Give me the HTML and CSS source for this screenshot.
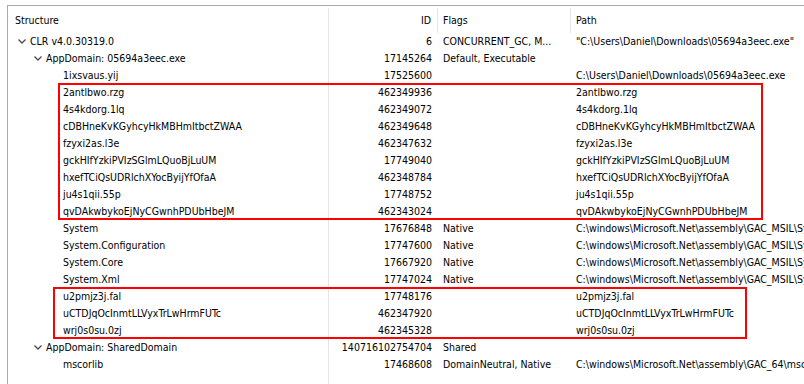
FILE: index.html
```html
<!DOCTYPE html>
<html lang="en">
<head>
    <meta charset="UTF-8">
    <title>Structure</title>
    <link rel="stylesheet" href="styles.css">
</head>
<body>

<div class="view">
    <div class="head">
        <div class="col-name">Structure</div>
        <div class="col-id">ID</div>
        <div class="col-flags">Flags</div>
        <div class="col-path">Path</div>
    </div>

    <div class="row lvl-0">
        <div class="col-name"><span class="toggle"><svg width="8" height="5" viewBox="0 0 8 5"><polyline points="0.5,0.5 4,4 7.5,0.5"/></svg></span>CLR v4.0.30319.0</div>
        <div class="col-id">6</div>
        <div class="col-flags">CONCURRENT_GC, M...</div>
        <div class="col-path">"C:\Users\Daniel\Downloads\05694a3eec.exe"</div>
    </div>
    <div class="row lvl-1">
        <div class="col-name"><span class="toggle"><svg width="8" height="5" viewBox="0 0 8 5"><polyline points="0.5,0.5 4,4 7.5,0.5"/></svg></span>AppDomain: 05694a3eec.exe</div>
        <div class="col-id">17145264</div>
        <div class="col-flags">Default, Executable</div>
        <div class="col-path"></div>
    </div>
    <div class="row lvl-2">
        <div class="col-name">1ixsvaus.yij</div>
        <div class="col-id">17525600</div>
        <div class="col-flags"></div>
        <div class="col-path">C:\Users\Daniel\Downloads\05694a3eec.exe</div>
    </div>

    <div class="group">
        <div class="row lvl-2">
            <div class="col-name">2antlbwo.rzg</div>
            <div class="col-id">462349936</div>
            <div class="col-flags"></div>
            <div class="col-path">2antlbwo.rzg</div>
        </div>
        <div class="row lvl-2">
            <div class="col-name">4s4kdorg.1lq</div>
            <div class="col-id">462349072</div>
            <div class="col-flags"></div>
            <div class="col-path">4s4kdorg.1lq</div>
        </div>
        <div class="row lvl-2">
            <div class="col-name">cDBHneKvKGyhcyHkMBHmItbctZWAA</div>
            <div class="col-id">462349648</div>
            <div class="col-flags"></div>
            <div class="col-path">cDBHneKvKGyhcyHkMBHmItbctZWAA</div>
        </div>
        <div class="row lvl-2">
            <div class="col-name">fzyxi2as.l3e</div>
            <div class="col-id">462347632</div>
            <div class="col-flags"></div>
            <div class="col-path">fzyxi2as.l3e</div>
        </div>
        <div class="row lvl-2">
            <div class="col-name">gckHIfYzkiPVIzSGlmLQuoBjLuUM</div>
            <div class="col-id">17749040</div>
            <div class="col-flags"></div>
            <div class="col-path">gckHIfYzkiPVIzSGlmLQuoBjLuUM</div>
        </div>
        <div class="row lvl-2">
            <div class="col-name">hxefTCiQsUDRlchXYocByijYfOfaA</div>
            <div class="col-id">462348784</div>
            <div class="col-flags"></div>
            <div class="col-path">hxefTCiQsUDRlchXYocByijYfOfaA</div>
        </div>
        <div class="row lvl-2">
            <div class="col-name">ju4s1qii.55p</div>
            <div class="col-id">17748752</div>
            <div class="col-flags"></div>
            <div class="col-path">ju4s1qii.55p</div>
        </div>
        <div class="row lvl-2">
            <div class="col-name">qvDAkwbykoEjNyCGwnhPDUbHbeJM</div>
            <div class="col-id">462343024</div>
            <div class="col-flags"></div>
            <div class="col-path">qvDAkwbykoEjNyCGwnhPDUbHbeJM</div>
        </div>
        <div class="mark mark-a"></div>
    </div>

    <div class="row lvl-2">
        <div class="col-name">System</div>
        <div class="col-id">17676848</div>
        <div class="col-flags">Native</div>
        <div class="col-path">C:\windows\Microsoft.Net\assembly\GAC_MSIL\System\v4.0_4.0.0.0__b77a5c561934e089\System.dll</div>
    </div>
    <div class="row lvl-2">
        <div class="col-name">System.Configuration</div>
        <div class="col-id">17747600</div>
        <div class="col-flags">Native</div>
        <div class="col-path">C:\windows\Microsoft.Net\assembly\GAC_MSIL\System.Configuration\v4.0_4.0.0.0__b03f5f7f11d50a3a\System.Configuration.dll</div>
    </div>
    <div class="row lvl-2">
        <div class="col-name">System.Core</div>
        <div class="col-id">17667920</div>
        <div class="col-flags">Native</div>
        <div class="col-path">C:\windows\Microsoft.Net\assembly\GAC_MSIL\System.Core\v4.0_4.0.0.0__b77a5c561934e089\System.Core.dll</div>
    </div>
    <div class="row lvl-2">
        <div class="col-name">System.Xml</div>
        <div class="col-id">17747024</div>
        <div class="col-flags">Native</div>
        <div class="col-path">C:\windows\Microsoft.Net\assembly\GAC_MSIL\System.Xml\v4.0_4.0.0.0__b77a5c561934e089\System.Xml.dll</div>
    </div>

    <div class="group">
        <div class="row lvl-2">
            <div class="col-name">u2pmjz3j.fal</div>
            <div class="col-id">17748176</div>
            <div class="col-flags"></div>
            <div class="col-path">u2pmjz3j.fal</div>
        </div>
        <div class="row lvl-2">
            <div class="col-name">uCTDJqOcInmtLLVyxTrLwHrmFUTc</div>
            <div class="col-id">462347920</div>
            <div class="col-flags"></div>
            <div class="col-path">uCTDJqOcInmtLLVyxTrLwHrmFUTc</div>
        </div>
        <div class="row lvl-2">
            <div class="col-name">wrj0s0su.0zj</div>
            <div class="col-id">462345328</div>
            <div class="col-flags"></div>
            <div class="col-path">wrj0s0su.0zj</div>
        </div>
        <div class="mark mark-b"></div>
    </div>

    <div class="row lvl-1">
        <div class="col-name"><span class="toggle"><svg width="8" height="5" viewBox="0 0 8 5"><polyline points="0.5,0.5 4,4 7.5,0.5"/></svg></span>AppDomain: SharedDomain</div>
        <div class="col-id">140716102754704</div>
        <div class="col-flags">Shared</div>
        <div class="col-path"></div>
    </div>
    <div class="row lvl-2">
        <div class="col-name">mscorlib</div>
        <div class="col-id">17468608</div>
        <div class="col-flags">DomainNeutral, Native</div>
        <div class="col-path">C:\windows\Microsoft.Net\assembly\GAC_64\mscorlib\v4.0_4.0.0.0__b77a5c561934e089\mscorlib.dll</div>
    </div>
    <div class="row lvl-2 filler">
        <div class="col-name"></div>
    </div>
</div>

</body>
</html>
```

FILE: styles.css
```css
body {
    margin: 0;
    background: #fff;
    overflow: hidden;
    font-family: "DejaVu Sans Condensed", "DejaVu Sans", sans-serif;
    font-size: 10.5px;
    color: #000;
}

.view {
    margin: 5px 0 0 7px;
    width: 1200px;
    border-top: 1px solid #a9a9a9;
    border-left: 1px solid #a9a9a9;
}

.head, .row {
    display: flex;
    white-space: nowrap;
}

.head {
    height: 27px;
    align-items: flex-end;
}

.head > div {
    height: 25px;
    line-height: 25px;
    border-right: 1px solid #e5e5e5;
}

.row {
    height: 17px;
    line-height: 17px;
}

.col-name {
    box-sizing: border-box;
    width: 321px;
    flex: none;
    overflow: hidden;
    border-right: 1px solid #e5e5e5;
}

.head .col-name {
    padding-left: 7px;
}

.col-id {
    box-sizing: border-box;
    width: 109px;
    flex: none;
    padding-right: 6px;
    text-align: right;
}

.col-flags {
    box-sizing: border-box;
    width: 133px;
    flex: none;
    padding-left: 5px;
    overflow: hidden;
}

.col-path {
    flex: none;
    padding-left: 5px;
}

.head .col-path {
    border-right: none;
}

.toggle {
    display: inline-flex;
    width: 16px;
    height: 17px;
    align-items: center;
    justify-content: center;
    vertical-align: top;
}

.toggle svg {
    fill: none;
    stroke: #4a4a4a;
    stroke-width: 1.3;
}

.lvl-0 .col-name {
    padding-left: 6px;
}

.lvl-1 .col-name {
    padding-left: 22px;
}

.lvl-2 .col-name {
    padding-left: 55px;
}

.filler {
    height: 11px;
}

.group {
    position: relative;
}

.mark {
    position: absolute;
    top: -1px;
    bottom: 0;
    border: 2px solid #f00;
}

.mark-a {
    left: 50px;
    width: 701px;
}

.mark-b {
    left: 45px;
    width: 690px;
}
```
